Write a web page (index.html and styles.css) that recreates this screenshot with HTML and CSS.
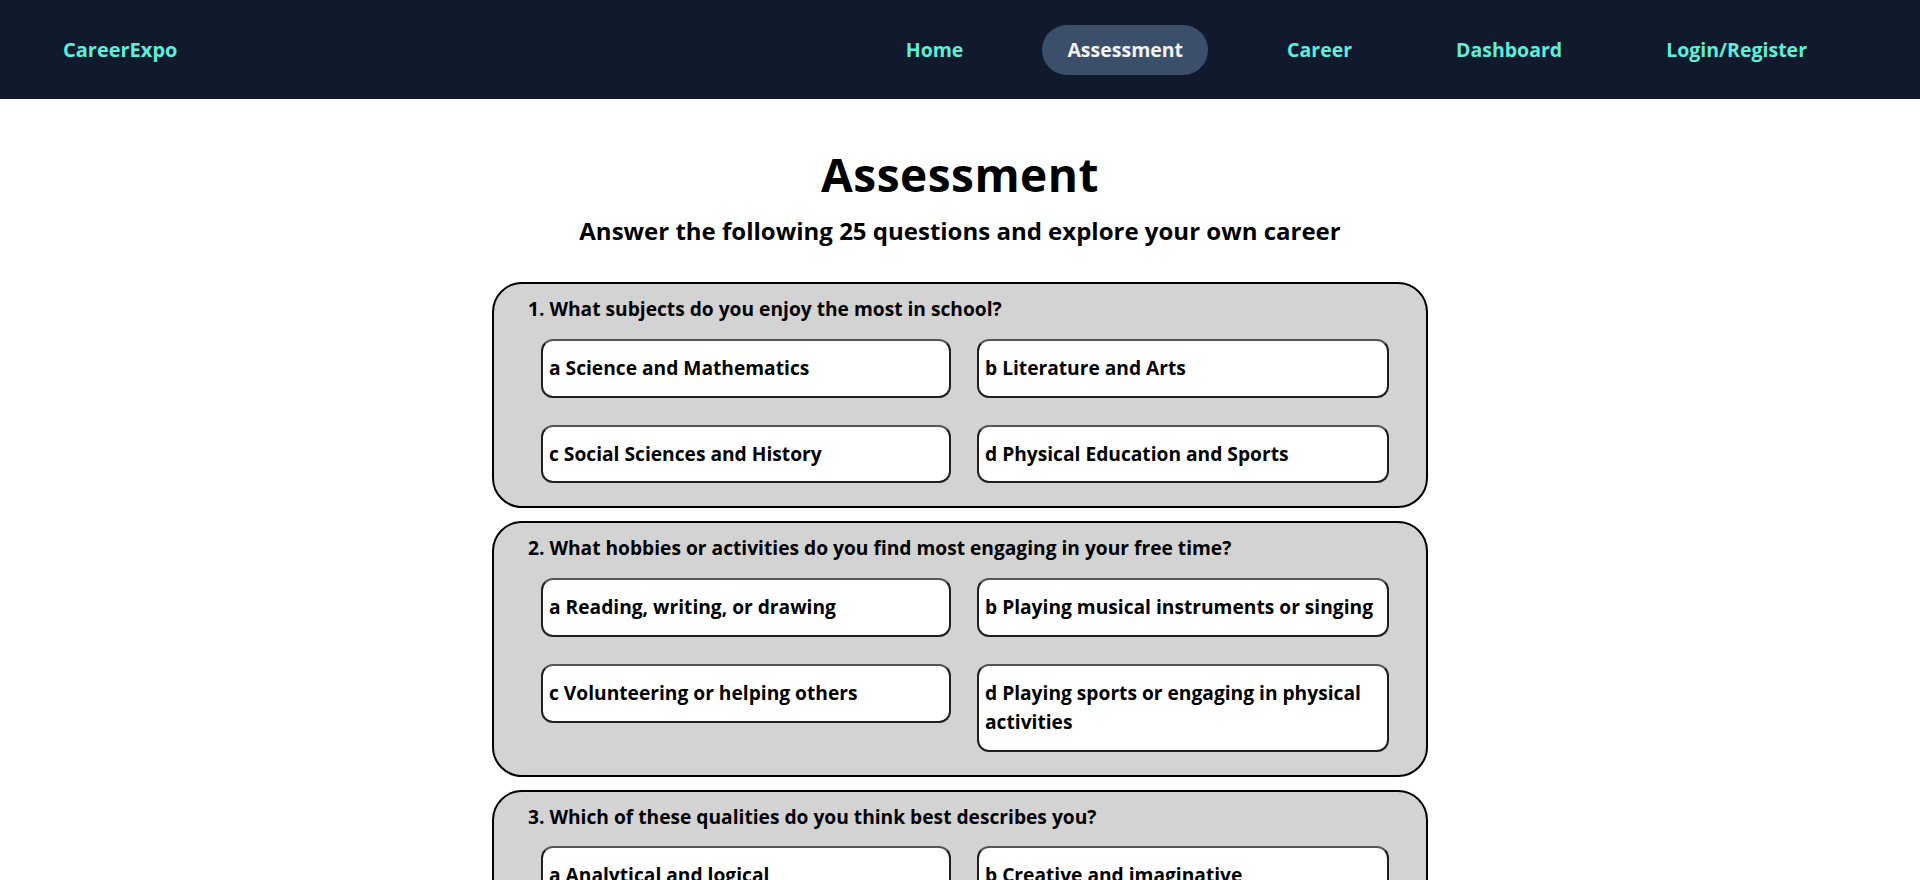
FILE: index.html
```html
<!DOCTYPE html>
<html lang="en">
<head>
<meta charset="utf-8">
<title>CareerExpo - Assessment</title>
<link rel="stylesheet" href="styles.css">
</head>
<body>
<nav class="navbar">
  <a class="logo" href="#">CareerExpo</a>
  <ul class="nav-links">
    <li><a class="nav-link" href="#">Home</a></li>
    <li><a class="nav-link active" href="#">Assessment</a></li>
    <li><a class="nav-link" href="#">Career</a></li>
    <li><a class="nav-link" href="#">Dashboard</a></li>
    <li><a class="nav-link" href="#">Login/Register</a></li>
  </ul>
</nav>
<main class="assessment">
  <h1 class="title">Assessment</h1>
  <h2 class="subtitle">Answer the following 25 questions and explore your own career</h2>

  <section class="question-card">
    <p class="question">1. What subjects do you enjoy the most in school?</p>
    <div class="options">
      <button class="option">a Science and Mathematics</button>
      <button class="option">b Literature and Arts</button>
      <button class="option">c Social Sciences and History</button>
      <button class="option">d Physical Education and Sports</button>
    </div>
  </section>

  <section class="question-card">
    <p class="question">2. What hobbies or activities do you find most engaging in your free time?</p>
    <div class="options">
      <button class="option">a Reading, writing, or drawing</button>
      <button class="option">b Playing musical instruments or singing</button>
      <button class="option">c Volunteering or helping others</button>
      <button class="option">d Playing sports or engaging in physical activities</button>
    </div>
  </section>

  <section class="question-card">
    <p class="question">3. Which of these qualities do you think best describes you?</p>
    <div class="options">
      <button class="option">a Analytical and logical</button>
      <button class="option">b Creative and imaginative</button>
      <button class="option">c Compassionate and empathetic</button>
      <button class="option">d Energetic and adventurous</button>
    </div>
  </section>
</main>
</body>
</html>
```

FILE: styles.css
```css
* {
  box-sizing: border-box;
}

body {
  margin: 0;
  background: #ffffff;
  color: #000000;
  font-family: "Open Sans", "Lato", sans-serif;
  font-weight: 700;
}

.navbar {
  height: 99px;
  background: #111a2c;
  display: flex;
  align-items: center;
  justify-content: space-between;
  padding: 0 88px 0 63px;
}

.logo {
  color: #5eeedc;
  font-size: 20px;
  font-weight: 700;
  text-decoration: none;
}

.nav-links {
  list-style: none;
  margin: 0;
  padding: 0;
  display: flex;
  gap: 54px;
}

.nav-link {
  display: block;
  height: 50px;
  line-height: 50px;
  padding: 0 25px;
  border-radius: 25px;
  color: #5eeedc;
  font-size: 19.5px;
  font-weight: 700;
  text-decoration: none;
}

.nav-link.active {
  background: #3b4f6b;
  color: #f3f4f6;
}

.assessment {
  display: flex;
  flex-direction: column;
  align-items: center;
}

.title {
  margin: 48px 0 15px;
  font-size: 46px;
  line-height: 1.2;
  font-weight: 700;
  letter-spacing: 0.5px;
}

.subtitle {
  margin: 0 0 36px;
  font-size: 24px;
  line-height: 1.2;
  font-weight: 700;
}

.question-card {
  width: 936px;
  margin-bottom: 13px;
  background: #d3d3d3;
  border: 2px solid #000000;
  border-radius: 30px;
  padding: 11px 37px 23px 34px;
}

.question {
  margin: 0 0 15px;
  font-size: 19.2px;
  line-height: 1.5;
}

.options {
  display: grid;
  grid-template-columns: 410px 412px;
  column-gap: 26px;
  row-gap: 27px;
  padding-left: 13px;
  align-items: start;
}

.option {
  display: block;
  width: 100%;
  text-align: left;
  background: #ffffff;
  color: #000000;
  border: 2px solid #1f1f1f;
  border-top-color: #555555;
  border-radius: 12px;
  padding: 13px 6px;
  font-family: inherit;
  font-size: 19.2px;
  font-weight: 700;
  line-height: 1.5;
}
```
